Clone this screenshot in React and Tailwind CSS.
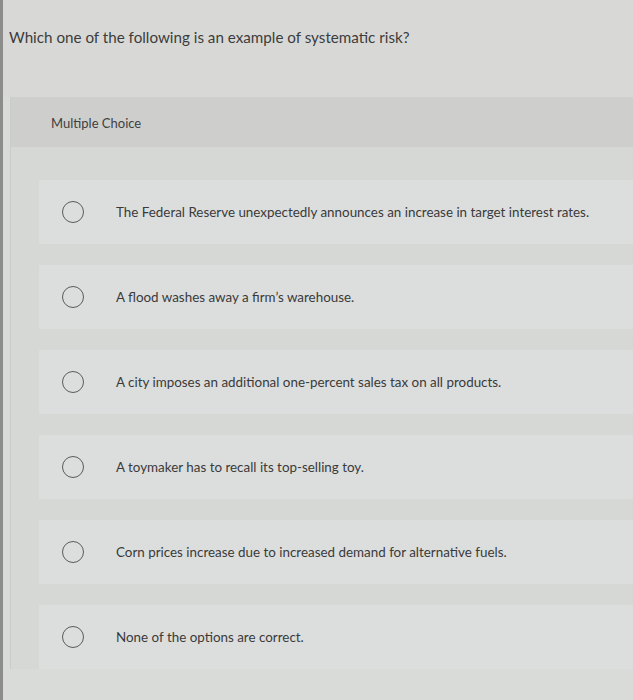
import React from "react";

const options = [
  "The Federal Reserve unexpectedly announces an increase in target interest rates.",
  "A flood washes away a firm\u2019s warehouse.",
  "A city imposes an additional one-percent sales tax on all products.",
  "A toymaker has to recall its top-selling toy.",
  "Corn prices increase due to increased demand for alternative fuels.",
  "None of the options are correct.",
];

const App = () => {
  return (
    <div
      className="w-[633px] h-[700px] overflow-hidden bg-[#d9dbd9] border-l-[3px] border-[#8c8d8b] text-[#333]"
      style={{ fontFamily: "Lato, 'Open Sans', sans-serif" }}
    >
      {/* Question */}
      <div className="h-[97px] pl-[6px] pt-[27px] bg-[#d8d9d6]">
        <p className="text-[15.2px] leading-[20px] text-[#3c3c3c]">
          Which one of the following is an example of systematic risk?
        </p>
      </div>

      {/* Answer block */}
      <div className="ml-[7px] border-l border-[#cbccca]">
        <div className="h-[50px] bg-[#cecfcd] pl-[40px] pt-[4px] flex items-center">
          <span className="text-[13px] text-[#404040]">Multiple Choice</span>
        </div>

        <div className="pt-[33px] pl-[28px] flex flex-col gap-[21px] bg-[#d6d8d6]">
          {options.map((text, i) => (
            <div
              key={i}
              className="h-[64px] bg-[#dcdedd] flex items-center pl-[23px]"
            >
              <span className="w-[22px] h-[22px] rounded-full border-[1.5px] border-[#5a5b5a] shrink-0" />
              <span className="ml-[32px] text-[13.4px] text-[#3a3a3a]">{text}</span>
            </div>
          ))}
        </div>
      </div>
    </div>
  );
};

export default App;
